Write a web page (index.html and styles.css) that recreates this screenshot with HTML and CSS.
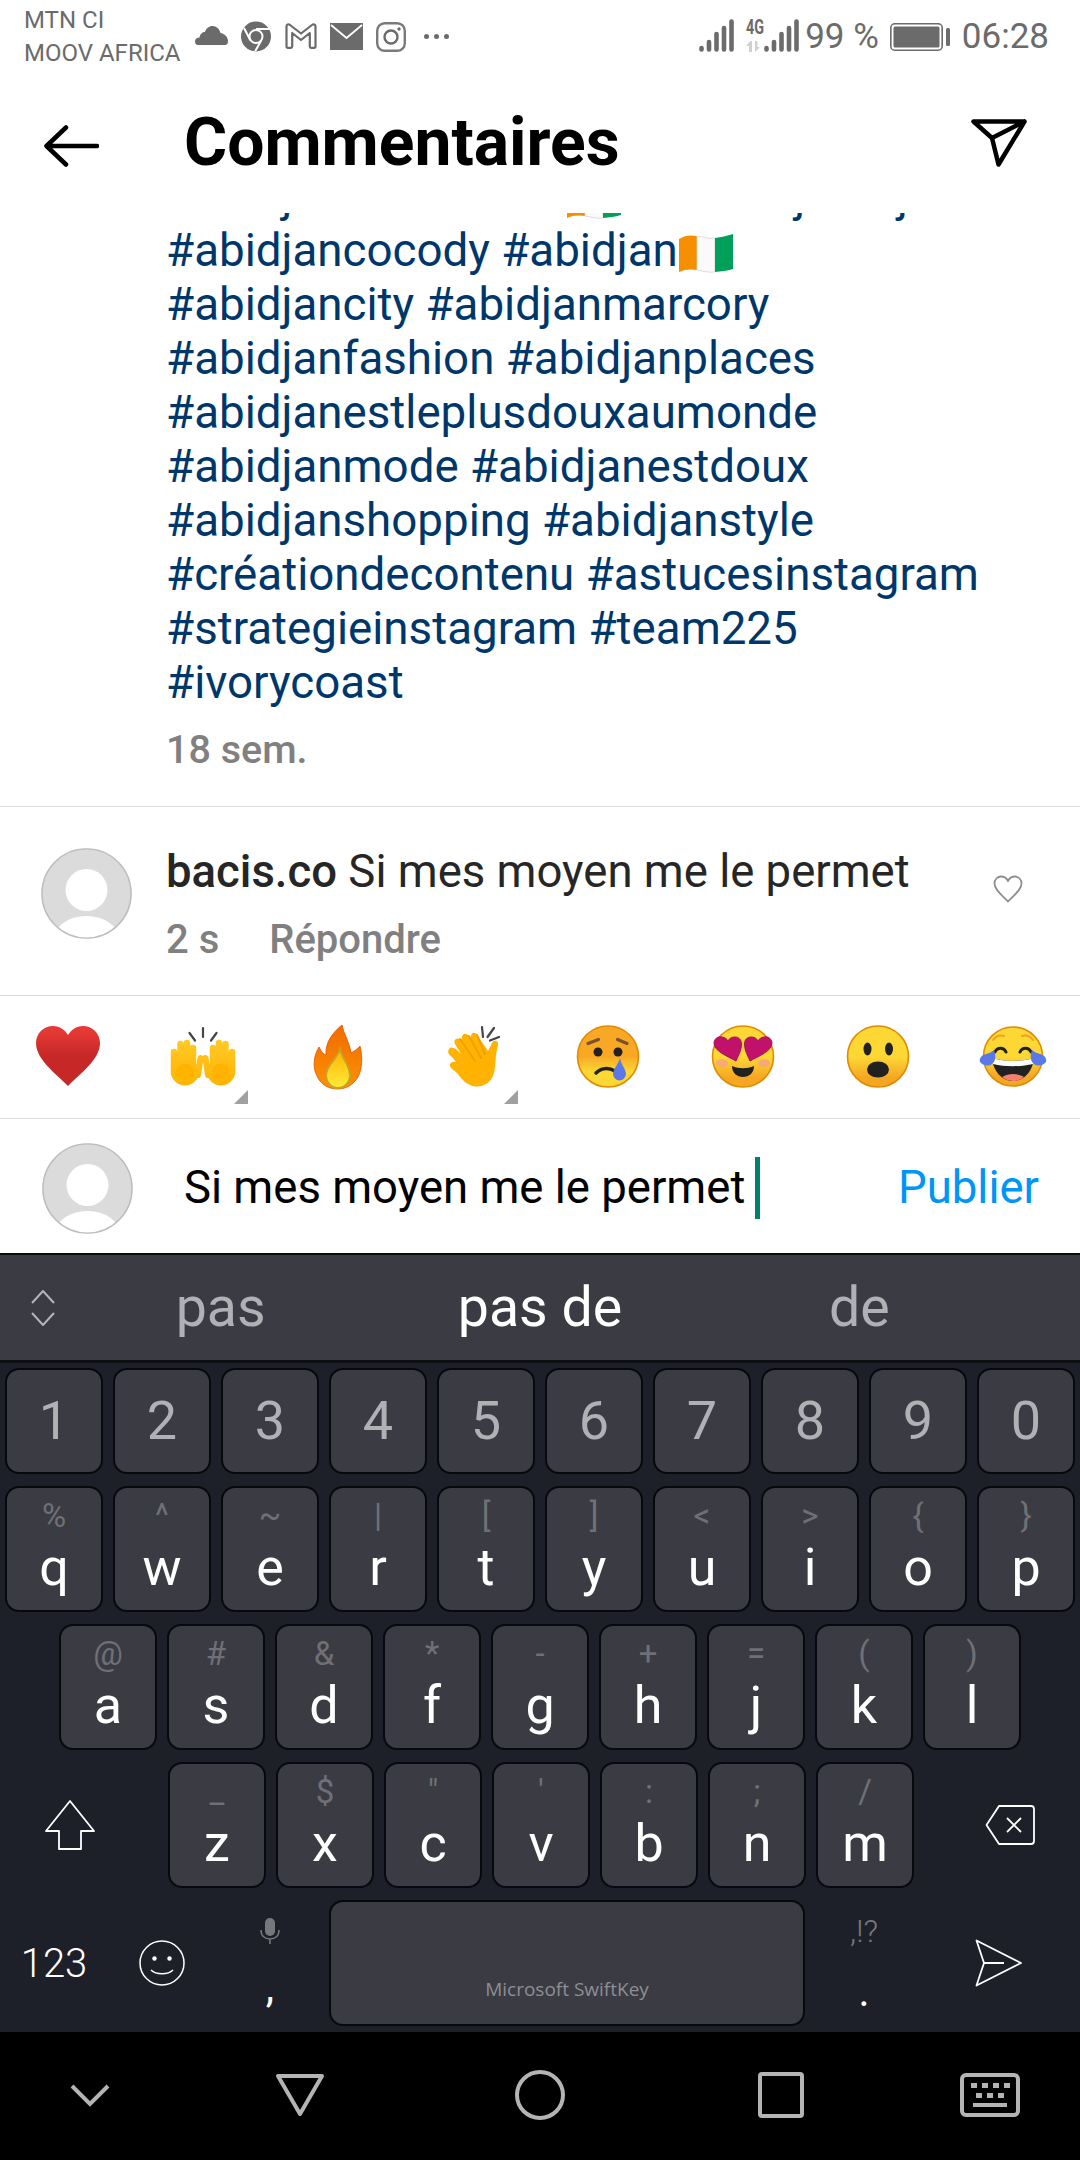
FILE: index.html
```html
<!DOCTYPE html>
<html lang="fr">
<head>
<meta charset="utf-8">
<title>Commentaires</title>
<link rel="stylesheet" href="styles.css">
</head>
<body>
<svg class="defs" width="0" height="0">
  <defs>
    <clipPath id="avatar-clip"><circle cx="45.5" cy="45.5" r="45"/></clipPath>
    <symbol id="avatar" viewBox="0 0 91 91">
      <circle cx="45.5" cy="45.5" r="45" fill="#dbdbdb"/>
      <g clip-path="url(#avatar-clip)" fill="#fff">
        <ellipse cx="45.5" cy="42" rx="21" ry="21"/>
        <ellipse cx="45.5" cy="92" rx="33" ry="24"/>
      </g>
      <circle cx="45.5" cy="45.5" r="44.6" fill="none" stroke="#bdbdbd" stroke-width="1.4"/>
    </symbol>
    <symbol id="bars" viewBox="0 0 35 33">
      <g stroke="#6b6b6b" stroke-width="4.6" stroke-linecap="round">
        <path d="M2.5 29v1.5M10 23v7.5M17.5 15v15.5M25 9v21.5M32.500 2.500v28"/>
      </g>
    </symbol>
    <linearGradient id="g-red" x1="0" y1="0" x2="0" y2="1"><stop offset=".1" stop-color="#e53935"/><stop offset=".5" stop-color="#c62828"/></linearGradient>
    <linearGradient id="g-hand" gradientUnits="userSpaceOnUse" x1="0" y1="16" x2="0" y2="64"><stop offset="0" stop-color="#ffca28"/><stop offset="1" stop-color="#ffb300"/></linearGradient>
    <linearGradient id="g-fire" x1="0" y1="0" x2="0" y2="1"><stop offset="0" stop-color="#ef6c00"/><stop offset="1" stop-color="#ff9100"/></linearGradient>
    <linearGradient id="g-flame" x1="0" y1="0" x2="0" y2="1"><stop offset="0" stop-color="#ffb300"/><stop offset="1" stop-color="#ffeb3b"/></linearGradient>
    <linearGradient id="g-sad" x1="0" y1="0" x2="0" y2="1"><stop offset=".5" stop-color="#f9a825"/><stop offset=".75" stop-color="#fdd835"/></linearGradient>
    <linearGradient id="g-happy" x1="0" y1="0" x2="0" y2="1"><stop offset=".5" stop-color="#fdd835"/><stop offset=".85" stop-color="#f5a623"/></linearGradient>
  </defs>
</svg>

<div class="phone">
  <div class="statusbar">
    <div class="carriers"><span>MTN CI</span><span>MOOV AFRICA</span></div>
    <svg class="st-cloud" viewBox="0 0 33 19"><path fill="#6b6b6b" d="M3 19C1 19 0 17.500 0 15.500 0 13 2 11.500 4.500 11.500 5 8 7.500 6 10 6 11 2.500 14 0 17.500 0 21.500 0 24.500 3 25.500 7 29.500 7.500 33 11 33 15 33 17.500 32 19 30 19Z"/></svg>
    <svg class="st-chrome" viewBox="0 0 30 31"><circle cx="15" cy="15.500" r="15" fill="#6b6b6b"/><circle cx="15" cy="15.500" r="6.500" fill="#6b6b6b" stroke="#fff" stroke-width="2"/><path d="M15 8h14M9.500 19.500L3 7M20.500 19L14 30.500" stroke="#fff" stroke-width="2" fill="none"/></svg>
    <svg class="st-gmail" viewBox="0 0 32 26"><path fill="none" stroke="#6b6b6b" stroke-width="2.200" stroke-linejoin="round" d="M1.500 3.500C1.500 1.500 3.500 .8 5 2L16 10.500 27 2C28.500 .8 30.500 1.500 30.500 3.500V23.500C30.500 24.200 30 24.800 29 24.800H26C25.200 24.800 24.800 24.200 24.800 23.500V10L16 17 7.200 10V23.500C7.200 24.200 6.800 24.800 6 24.800H3C2 24.800 1.500 24.200 1.500 23.500Z"/></svg>
    <svg class="st-mail" viewBox="0 0 33 27"><rect width="33" height="27" fill="#6b6b6b"/><path d="M1 2L16.500 15 32 2" fill="none" stroke="#fff" stroke-width="1.800"/></svg>
    <svg class="st-ig" viewBox="0 0 30 30"><rect x="1.200" y="1.200" width="27.600" height="27.600" rx="7.500" fill="none" stroke="#7a7a7a" stroke-width="2.400"/><circle cx="15" cy="15" r="6.500" fill="none" stroke="#6b6b6b" stroke-width="2.400"/><circle cx="23" cy="7" r="1.700" fill="#6b6b6b"/></svg>
    <div class="st-dots"><i></i><i></i><i></i></div>
    <div class="st-right">
      <svg class="st-bars" viewBox="0 0 35 33"><use href="#bars"/></svg>
      <svg class="st-4g" viewBox="0 0 18 33"><text x="0" y="14.500" textLength="18" lengthAdjust="spacingAndGlyphs" class="st-4g-text">4G</text><path fill="#d0d0d0" d="M4.500 22L0 27h3v6h3V22ZM9 22v11l5-5h-2.500v-6Z"/></svg>
      <svg class="st-bars" viewBox="0 0 35 33"><use href="#bars"/></svg>
      <span class="st-pct">99 %</span>
      <svg class="st-batt" viewBox="0 0 60 28"><rect x=".8" y=".8" width="51.400" height="26.400" rx="4" fill="none" stroke="#6b6b6b" stroke-width="1.600"/><rect x="3.500" y="3.500" width="46" height="21" rx="1.500" fill="#6b6b6b"/><rect x="56" y="5" width="4" height="18" rx="1.500" fill="#6b6b6b"/></svg>
      <span class="st-time">06:28</span>
    </div>
  </div>

  <header class="appbar">
    <svg class="ic-back" viewBox="0 0 55 42"><path d="M22 2.500L2.500 21 22 39.500M3 21H53" fill="none" stroke="#000" stroke-width="4.500" stroke-linecap="round" stroke-linejoin="round"/></svg>
    <h1 class="title">Commentaires</h1>
    <svg class="ic-send" viewBox="0 0 56 48"><path d="M2.500 2.500H53.500L27.500 45.500 21 19ZM21 19L53.500 2.500" fill="none" stroke="#000" stroke-width="4.500" stroke-linecap="round" stroke-linejoin="round"/></svg>
  </header>

  <main class="thread">
    <div class="caption">
      <p class="tags">#abidjantendancesi<svg class="flag" viewBox="0 0 56 40"><use href="#ci-flag"/></svg> #ivoirecjanorj<br>#abidjancocody #abidjan<svg class="flag" viewBox="0 0 56 40"><g id="ci-flag"><path fill="#f79000" d="M1 6C7 2 13 2 19 3V37C13 36 7 36 1 39Z"/><path fill="#fafafa" stroke="#d4d4d4" stroke-width=".8" d="M19 3C25 4 31 6 37 5V39C31 40 25 38 19 37Z"/><path fill="#00a05a" d="M37 5C43 4 49 3 55 1V36C49 38 43 38 37 39Z"/></g></svg><br>#abidjancity #abidjanmarcory<br>#abidjanfashion #abidjanplaces<br>#abidjanestleplusdouxaumonde<br>#abidjanmode #abidjanestdoux<br>#abidjanshopping #abidjanstyle<br>#créationdecontenu #astucesinstagram<br>#strategieinstagram #team225<br>#ivorycoast</p>
      <p class="age">18 sem.</p>
    </div>
  </main>

  <section class="comment">
    <svg class="avatar"><use href="#avatar"/></svg>
    <div class="comment-body">
      <p class="comment-text"><b>bacis.co</b> Si mes moyen me le permet</p>
      <p class="comment-meta"><span>2 s</span><span>Répondre</span></p>
    </div>
    <svg class="ic-heart" viewBox="0 0 30 28"><path d="M15 26.500C9 20 1.500 15 1.500 8.500 1.500 4.500 4.500 1.500 8 1.500 11 1.500 13.500 3 15 6 16.500 3 19 1.500 22 1.500 25.500 1.500 28.500 4.500 28.500 8.500 28.500 15 21 20 15 26.500Z" fill="none" stroke="#8e8e8e" stroke-width="1.800" stroke-linejoin="round"/></svg>
  </section>

  <section class="reactions">
    <div class="emoji"><svg viewBox="0 0 68 68"><path fill="url(#g-red)" d="M34 63C21 50 2 36 2 20 2 10 10 3 19 3 26 3 31 7 34 12 37 7 42 3 49 3 58 3 66 10 66 20 66 36 47 50 34 63Z"/></svg></div>
    <div class="emoji has-more"><svg viewBox="0 0 68 68"><g id="hand-l" stroke="url(#g-hand)" stroke-width="6.500" stroke-linecap="round" fill="none"><path d="M5 29V50M11.500 21V50M18 20V50M24 25V50"/><path d="M31.500 35L29 52" stroke-width="6"/><ellipse cx="16" cy="49" rx="11.500" ry="11" fill="#ffb300" stroke-width="5"/></g><use href="#hand-l" transform="translate(68 0) scale(-1 1)"/><path d="M34 5V14M20.500 10L26 17.500M47.500 10L42 17.500" stroke="#444" stroke-width="2.200" stroke-linecap="round"/></svg></div>
    <div class="emoji"><svg viewBox="0 0 68 68"><path fill="url(#g-fire)" stroke="#e65100" stroke-width=".8" d="M38 2C40 12 46 20 47 30 50 28 54 26 56 23 59 35 58 46 54 54 49 62 42 66 34 66 25 66 17 62 13 53 8 44 10 32 15 24 17 28 19 31 22 32 21 20 28 10 38 2Z"/><path fill="url(#g-flame)" stroke="#c9a227" stroke-width="2" d="M36 26C38 36 46 42 46 52 46 60 40 65 34 65 27 65 22 59 22 52 22 42 32 38 36 26Z"/></svg></div>
    <div class="emoji has-more"><svg viewBox="0 0 68 68"><path fill="#ffb300" d="M31 62C40 66 52 62 55 50 57 42 56 32 59 22 60 18 55 16 53 20L49 28 38 12C36 8 31 10 32 15L30 13C27 9 22 11 23 16L21 16C17 14 14 18 16 21L22 31C17 25 12 23 10 26 8 29 10 32 13 34L17 39C14 38 10 40 11 43 12 46 15 47 18 50 22 55 26 60 31 62Z"/><path d="M21 16L36 38M30 13L42 35M38 12L46 31" fill="none" stroke="#f0a000" stroke-width="2" stroke-linecap="round"/><path d="M43 4L44 14M55 5L48.500 14M60 14L51 17.500" stroke="#444" stroke-width="2.200" stroke-linecap="round"/></svg></div>
    <div class="emoji"><svg viewBox="0 0 68 68"><circle cx="34" cy="33.500" r="30.500" fill="url(#g-sad)" stroke="#e08c00" stroke-width="1.600"/><path d="M14 20.500L24.500 16.500M43.500 16.500L53 20.500" stroke="#7a5230" stroke-width="3.200" stroke-linecap="round"/><circle cx="24" cy="29" r="4.500" fill="#212121"/><circle cx="44" cy="29" r="4.500" fill="#212121"/><path d="M22 50C27 45 34 44 41 48" fill="none" stroke="#212121" stroke-width="3.500" stroke-linecap="round"/><path fill="#5b78e8" d="M46 35C47 42 52 46 52 51A6.500 6.500 0 0 1 39 51C39 46 44 42 46 35Z"/></svg></div>
    <div class="emoji"><svg viewBox="0 0 68 68"><circle cx="34" cy="33.500" r="30.500" fill="url(#g-happy)" stroke="#e08c00" stroke-width="1.600"/><ellipse cx="13" cy="40" rx="6" ry="4" fill="#f48fb1" opacity=".55"/><ellipse cx="55" cy="40" rx="6" ry="4" fill="#f48fb1" opacity=".55"/><path fill="#c2116b" stroke="#a3125a" stroke-width="1" d="M27 38C18 33 5 28 5 20 5 16 9 13 13 14 16 14.500 18 16 19 18 20.500 15 23 14 26 14 30 14 32.500 17 32.500 21 32.500 28 29 33 27 38Z"/><path fill="#c2116b" stroke="#a3125a" stroke-width="1" d="M41 38C50 33 63 28 63 20 63 16 59 13 55 14 52 14.500 50 16 49 18 47.500 15 45 14 42 14 38 14 35.500 17 35.500 21 35.500 28 39 33 41 38Z"/><path fill="#212121" d="M23 43C30 46 38 46 45 43 45 50 40 54 34 54 28 54 23 50 23 43Z"/></svg></div>
    <div class="emoji"><svg viewBox="0 0 68 68"><circle cx="34" cy="33.500" r="30.500" fill="url(#g-happy)" stroke="#e08c00" stroke-width="1.600"/><ellipse cx="23.500" cy="26" rx="4" ry="6.500" fill="#212121"/><ellipse cx="45" cy="26" rx="4" ry="6.500" fill="#212121"/><ellipse cx="34" cy="46.500" rx="11" ry="8" fill="#212121"/></svg></div>
    <div class="emoji"><svg viewBox="0 0 68 68"><circle cx="34" cy="33.500" r="29.500" fill="url(#g-happy)" stroke="#e08c00" stroke-width="1.600"/><path d="M14 17C17 13 21 12 25 13M43 13C47 12 51 13 54 17" fill="none" stroke="#f0a020" stroke-width="2" stroke-linecap="round"/><path d="M16 29C18 24 25 24 27 29M41 29C43 24 50 24 52 29" fill="none" stroke="#212121" stroke-width="3" stroke-linecap="round"/><path fill="#212121" d="M13 35C26 39 42 39 55 35 54 48 45 58 34 58 23 58 14 48 13 35Z"/><path fill="#fff" d="M13 35C26 39 42 39 55 35L54 41C42 44 26 44 14 41Z"/><path fill="#f4816d" d="M23 54C30 50 38 50 45 54 41 57 37 58 34 58 31 58 27 57 23 54Z"/><path fill="#5b78e8" d="M15 27C17 32 17 38 13 41 9 44 3 42 1 39 0 35 3 32 7 31 10 30 13 29 15 27ZM53 27C51 32 51 38 55 41 59 44 65 42 67 39 68 35 65 32 61 31 58 30 55 29 53 27Z"/></svg></div>
  </section>

  <section class="composer">
    <svg class="avatar"><use href="#avatar"/></svg>
    <div class="input"><span class="input-text">Si mes moyen me le permet</span><i class="caret"></i></div>
    <span class="publish">Publier</span>
  </section>

  <section class="keyboard">
    <div class="suggestions">
      <div class="sug-expand"><svg viewBox="0 0 24 36"><path d="M1 13L12 1 23 13M1 23L12 35 23 23" fill="none" stroke="#b5b5b9" stroke-width="2"/></svg></div>
      <span class="sug">pas</span><span class="sug sug-main">pas de</span><span class="sug">de</span>
      <div class="sug-spacer"></div>
    </div>
    <div class="keys">
      <div class="row row-num">
        <div class="key"><span class="digit">1</span></div><div class="key"><span class="digit">2</span></div><div class="key"><span class="digit">3</span></div><div class="key"><span class="digit">4</span></div><div class="key"><span class="digit">5</span></div><div class="key"><span class="digit">6</span></div><div class="key"><span class="digit">7</span></div><div class="key"><span class="digit">8</span></div><div class="key"><span class="digit">9</span></div><div class="key"><span class="digit">0</span></div>
      </div>
      <div class="row">
        <div class="key"><small>%</small><span>q</span></div><div class="key"><small>^</small><span>w</span></div><div class="key"><small>~</small><span>e</span></div><div class="key"><small>|</small><span>r</span></div><div class="key"><small>[</small><span>t</span></div><div class="key"><small>]</small><span>y</span></div><div class="key"><small>&lt;</small><span>u</span></div><div class="key"><small>&gt;</small><span>i</span></div><div class="key"><small>{</small><span>o</span></div><div class="key"><small>}</small><span>p</span></div>
      </div>
      <div class="row row-mid">
        <div class="key"><small>@</small><span>a</span></div><div class="key"><small>#</small><span>s</span></div><div class="key"><small>&amp;</small><span>d</span></div><div class="key"><small>*</small><span>f</span></div><div class="key"><small>-</small><span>g</span></div><div class="key"><small>+</small><span>h</span></div><div class="key"><small>=</small><span>j</span></div><div class="key"><small>(</small><span>k</span></div><div class="key"><small>)</small><span>l</span></div>
      </div>
      <div class="row row-low">
        <div class="side side-shift"><svg class="ic-shift" viewBox="0 0 50 50"><path d="M25 1L49 31H36V49H14V31H1Z" fill="none" stroke="#fff" stroke-width="1.800" stroke-linejoin="round"/></svg></div>
        <div class="key"><small>_</small><span>z</span></div><div class="key"><small>$</small><span>x</span></div><div class="key"><small>"</small><span>c</span></div><div class="key"><small>'</small><span>v</span></div><div class="key"><small>:</small><span>b</span></div><div class="key"><small>;</small><span>n</span></div><div class="key"><small>/</small><span>m</span></div>
        <div class="side side-del"><svg class="ic-del" viewBox="0 0 50 40"><path d="M14 1H46C48 1 49 2 49 4V36C49 38 48 39 46 39H14L1.500 20Z" fill="none" stroke="#fff" stroke-width="1.800" stroke-linejoin="round"/><path d="M22 13L36 27M36 13L22 27" stroke="#fff" stroke-width="1.800"/></svg></div>
      </div>
      <div class="row row-bottom">
        <div class="fn fn-123">123</div>
        <div class="fn"><svg class="ic-smile" viewBox="0 0 46 46"><circle cx="23" cy="23" r="22" fill="none" stroke="#fff" stroke-width="1.500"/><circle cx="15.500" cy="18.500" r="2.200" fill="#fff"/><circle cx="30.500" cy="18.500" r="2.200" fill="#fff"/><path d="M12 30C17 35 29 35 34 30" fill="none" stroke="#fff" stroke-width="1.500"/></svg></div>
        <div class="fn fn-punct">
          <svg class="ic-mic" viewBox="0 0 20 26"><rect x="5" y="0" width="10" height="18" rx="5" fill="#77787c"/><path d="M1 12C1 18 5 21 10 21 15 21 19 18 19 12M10 21V26" fill="none" stroke="#77787c" stroke-width="1.600"/></svg>
          <span class="punct">,</span>
        </div>
        <div class="space"><span>Microsoft SwiftKey</span></div>
        <div class="fn fn-punct">
          <small class="alt-punct">,!?</small>
          <span class="punct">.</span>
        </div>
        <div class="fn fn-send"><svg class="ic-enter" viewBox="0 0 48 48"><path d="M1.500 1.500L46 24 1.500 46.500 9 24ZM9 24H29" fill="none" stroke="#fff" stroke-width="1.800" stroke-linejoin="round"/></svg></div>
      </div>
    </div>
  </section>

  <nav class="navbar">
    <svg class="nv nv-chev" viewBox="0 0 40 24"><path d="M2 3L20 21 38 3" fill="none" stroke="#b4b4b4" stroke-width="4"/></svg>
    <svg class="nv nv-back" viewBox="0 0 50 44"><path d="M3 3H47L25 41Z" fill="none" stroke="#b4b4b4" stroke-width="4" stroke-linejoin="round"/></svg>
    <svg class="nv nv-home" viewBox="0 0 50 50"><circle cx="25" cy="25" r="23" fill="none" stroke="#b4b4b4" stroke-width="4"/></svg>
    <svg class="nv nv-rec" viewBox="0 0 46 46"><rect x="2" y="2" width="42" height="42" rx="2" fill="none" stroke="#b4b4b4" stroke-width="4"/></svg>
    <svg class="nv nv-kbd" viewBox="0 0 60 44"><rect x="2" y="2" width="56" height="40" rx="4" fill="none" stroke="#b4b4b4" stroke-width="4"/><path d="M11 10h6v5h-6zM22 10h6v5h-6zM33 10h6v5h-6zM44 10h6v5h-6zM16 20h6v5h-6zM27 20h6v5h-6zM38 20h6v5h-6zM13 30h34v4H13z" fill="#b4b4b4"/></svg>
  </nav>
</div>
</body>
</html>
```

FILE: styles.css
```css
* { box-sizing: border-box; margin: 0; padding: 0; }
html, body { width: 1080px; height: 2160px; overflow: hidden; background: #fff; }
body { font-family: Roboto, "Liberation Sans", sans-serif; }
.defs { display: block; width: 0; height: 0; }
svg { display: block; flex: none; }
.phone { width: 1080px; height: 2160px; display: flex; flex-direction: column; }

/* status bar */
.statusbar { height: 75px; flex: none; display: flex; align-items: flex-start; padding-left: 24px; color: #6b6b6b; }
.carriers { display: flex; flex-direction: column; width: 158px; margin-top: 4px; font-size: 24px; line-height: 33px; white-space: nowrap; }
.st-cloud { width: 33px; height: 19px; margin: 26px 0 0 13px; }
.st-chrome { width: 30px; height: 31px; margin: 21px 0 0 13px; }
.st-gmail { width: 32px; height: 26px; margin: 23px 0 0 14px; }
.st-mail { width: 33px; height: 27px; margin: 23px 0 0 13px; }
.st-ig { width: 30px; height: 30px; margin: 22px 0 0 13px; }
.st-dots { display: flex; gap: 5px; margin: 33.500px 0 0 18px; }
.st-dots i { width: 5px; height: 5px; border-radius: 50%; background: #6b6b6b; }
.st-right { margin-left: auto; padding-right: 31px; display: flex; align-items: flex-start; }
.st-bars { width: 35px; height: 33px; margin-top: 19px; }
.st-4g { width: 18px; height: 33px; margin: 19px 0 0 12px; }
.st-4g-text { font-family: Roboto, sans-serif; font-size: 20px; font-weight: 700; fill: #6b6b6b; }
.st-pct, .st-time { font-size: 35px; line-height: 40px; margin-top: 17px; white-space: nowrap; }
.st-pct { margin-left: 6px; }
.st-batt { width: 60px; height: 28px; margin: 23px 0 0 11px; }
.st-time { margin-left: 12px; }

/* app bar */
.appbar { height: 138px; flex: none; display: flex; align-items: center; padding: 0 53px 3px 44px; }
.ic-back { width: 55px; height: 42px; margin-top: 6px; }
.title { font-size: 66px; line-height: 70px; font-weight: 700; color: #000; margin-left: 85px; white-space: nowrap; }
.ic-send { width: 56px; height: 48px; margin-left: auto; }

/* thread */
.thread { flex: 1; min-height: 0; overflow: hidden; display: flex; flex-direction: column; justify-content: flex-end; border-bottom: 1px solid #dbdbdb; }
.caption { padding: 0 20px 29px 166px; }
.tags { font-size: 45.700px; line-height: 54px; color: #00376b; white-space: nowrap; }
.flag { display: inline-block; width: 56px; height: 40px; vertical-align: -7px; }
.age { font-size: 39.500px; line-height: 54px; margin-top: 13px; font-weight: 500; color: #808080; }

/* comment */
.comment { height: 189px; flex: none; display: flex; align-items: flex-start; border-bottom: 1px solid #dbdbdb; padding-left: 41px; }
.avatar { width: 91px; height: 91px; }
.comment .avatar { margin-top: 41px; }
.comment-body { margin-left: 34px; padding-top: 38px; }
.comment-text { font-size: 45.500px; line-height: 54px; color: #262626; white-space: nowrap; }
.comment-text b { font-weight: 500; }
.comment-meta { display: flex; gap: 50px; font-size: 40px; line-height: 54px; margin-top: 14px; font-weight: 500; color: #808080; }
.ic-heart { width: 30px; height: 28px; margin: 68px 0 0 auto; margin-right: 57px; }

/* emoji row */
.reactions { height: 123px; flex: none; display: grid; grid-template-columns: repeat(8, 135px); border-bottom: 1px solid #dbdbdb; }
.emoji { position: relative; display: flex; align-items: center; justify-content: center; padding-bottom: 0; }
.emoji svg { width: 68px; height: 68px; }
.has-more::after { content: ""; position: absolute; right: 22px; bottom: 14px; width: 14px; height: 14px; background: #a0a0a0; clip-path: polygon(100% 0, 100% 100%, 0 100%); }

/* composer */
.composer { height: 134px; flex: none; display: flex; align-items: center; padding: 4px 41px 0 42px; }
.input { display: flex; align-items: center; margin-left: 51px; flex: 1; }
.input-text { font-size: 45.500px; line-height: 62px; color: #000; white-space: nowrap; }
.caret { width: 5px; height: 62px; margin-left: 10px; background: #00806e; }
.publish { font-size: 45.500px; line-height: 62px; color: #0095f6; }

/* keyboard */
.keyboard { flex: none; background: #1e2029; border-top: 2px solid #0b0b0d; }
.suggestions { height: 108px; display: flex; align-items: center; background: #3a3b43; border-bottom: 3px solid #0e0f13; }
.sug-expand { width: 61px; padding-left: 31px; }
.sug-expand svg { width: 24px; height: 36px; }
.sug-spacer { width: 61px; }
.sug { flex: 1; text-align: center; font-size: 55.500px; line-height: 64px; color: #b0b0b5; }
.sug-main { color: #fff; }
.keys { padding: 5px 0 6px; display: flex; flex-direction: column; gap: 12px; }
.row { display: flex; gap: 10px; height: 126px; padding: 0 5px; }
.row-num { height: 106px; }
.row-mid { padding-left: 59px; }
.row-low { padding: 0; }
.row-low .key { flex: none; }
.side { flex: 1; display: flex; align-items: center; justify-content: center; }
.side-shift { padding-right: 18px; }
.side-del { padding-left: 16px; }
.key { width: 98px; background: #3a3b43; border: 2px solid #08090c; border-radius: 14px; display: flex; flex-direction: column; align-items: center; color: #fff; }
.key small { height: 44px; margin-top: 6px; font-size: 33px; line-height: 44px; color: #6f7076; }
.key span { font-size: 52px; line-height: 60px; }
.key .digit { font-size: 54px; line-height: 102px; color: #b0b0b5; }
.row-bottom { padding: 0; gap: 0; }
.fn { width: 108px; display: flex; align-items: center; justify-content: center; color: #fff; }
.fn-123 { font-size: 40px; font-weight: 300; }
.ic-smile { width: 46px; height: 46px; }
.fn-punct { flex-direction: column; justify-content: flex-start; }
.ic-mic { width: 20px; height: 26px; margin-top: 18px; }
.alt-punct { height: 34px; margin-top: 14px; font-size: 32px; line-height: 34px; font-weight: 300; color: #77787c; }
.punct { font-size: 42px; line-height: 50px; margin-top: 19px; }
.space { width: 476px; margin: 0 5px; background: #3a3b43; border: 2px solid #08090c; border-radius: 14px; display: flex; align-items: flex-end; justify-content: center; padding-bottom: 22px; }
.space span { font-family: "Open Sans", sans-serif; font-size: 19px; line-height: 26px; color: #8e8e93; }
.fn-send { width: 162px; }
.ic-shift { width: 50px; height: 50px; }
.ic-del { width: 50px; height: 40px; }
.ic-enter { width: 48px; height: 48px; }

/* nav */
.navbar { height: 128px; flex: none; background: #000; display: flex; align-items: center; padding-bottom: 2px; }
.nv { flex: none; }
.nv-chev { width: 40px; height: 24px; margin-left: 70px; }
.nv-back { width: 50px; height: 44px; margin-left: 165px; }
.nv-home { width: 50px; height: 50px; margin-left: 190px; }
.nv-rec { width: 46px; height: 46px; margin-left: 193px; }
.nv-kbd { width: 60px; height: 44px; margin-left: 156px; }
```
